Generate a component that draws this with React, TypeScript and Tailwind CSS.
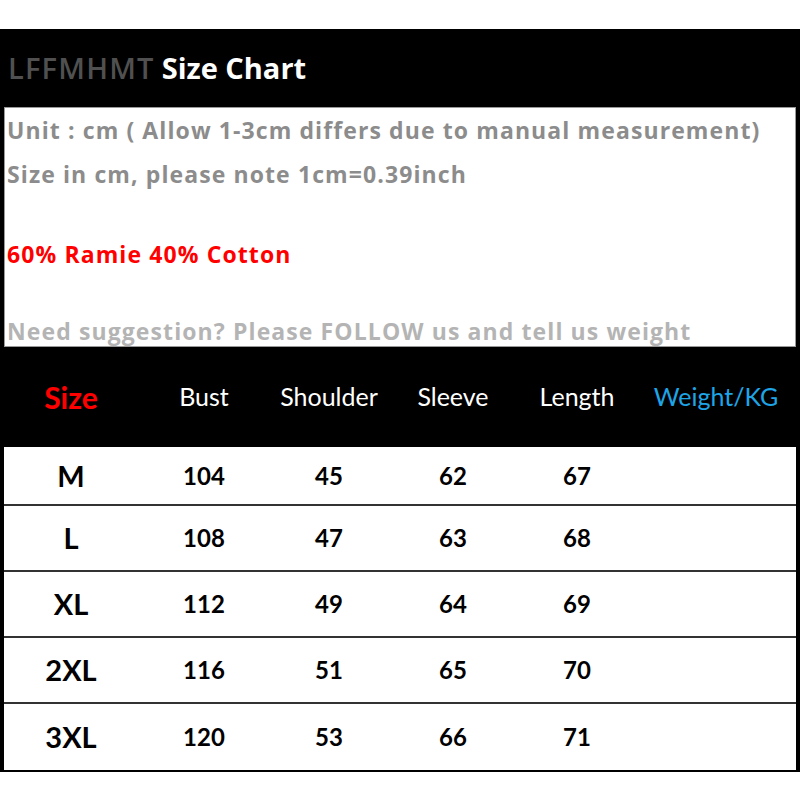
const headers = ["Bust", "Shoulder", "Sleeve", "Length"];

const rows = [
  ["M", "104", "45", "62", "67"],
  ["L", "108", "47", "63", "68"],
  ["XL", "112", "49", "64", "69"],
  ["2XL", "116", "51", "65", "70"],
  ["3XL", "120", "53", "66", "71"],
];

const cols = "grid grid-cols-[134px_132px_118px_130px_118px_1fr]";

const App = () => {
  return (
    <div className="w-[800px] h-[800px] bg-white pt-[29px] font-['Lato','Open_Sans',sans-serif]">
      <div className="bg-black px-[4px] pb-[2px]">
        <div className="h-[78px] flex items-center pl-[4px] text-[29px] font-bold font-['Open_Sans',sans-serif]">
          <span className="text-[#505050] font-semibold tracking-[1.2px]">LFFMHMT</span>
          <span className="text-white ml-[7px]">Size Chart</span>
        </div>

        <div className="h-[240px] bg-white border border-[#999] pl-[2px] font-bold text-[23px] tracking-[1.1px] font-['Open_Sans',sans-serif]">
          <p className="text-[#8c8c8c] leading-[44px]">Unit : cm ( Allow 1-3cm differs due to manual measurement)</p>
          <p className="text-[#8c8c8c] leading-[44px]">Size in cm, please note 1cm=0.39inch</p>
          <p className="text-[#ff0000] mt-[36px] leading-[44px]">60% Ramie 40% Cotton</p>
          <p className="text-[#b4b4b4] mt-[33px] leading-[44px]">Need suggestion? Please FOLLOW us and tell us weight</p>
        </div>

        <div className={`${cols} h-[100px] items-center text-center text-[25px] text-white`}>
          <span className="text-[#ff0000] font-bold text-[30px]">Size</span>
          {headers.map((h) => (
            <span key={h}>{h}</span>
          ))}
          <span className="text-[#1ea5e6]">Weight/KG</span>
        </div>

        <div className="bg-white">
          {rows.map((r, i) => (
            <div
              key={r[0]}
              className={`${cols} items-center text-center font-bold text-black text-[24px] ${i === 0 ? "h-[59px]" : "h-[66px]"} ${i < rows.length - 1 ? "border-b-2 border-[#333]" : ""}`}
            >
              <span className="text-[29px]">{r[0]}</span>
              {r.slice(1).map((v, j) => (
                <span key={j}>{v}</span>
              ))}
              <span />
            </div>
          ))}
        </div>
      </div>
    </div>
  );
};

export default App;
